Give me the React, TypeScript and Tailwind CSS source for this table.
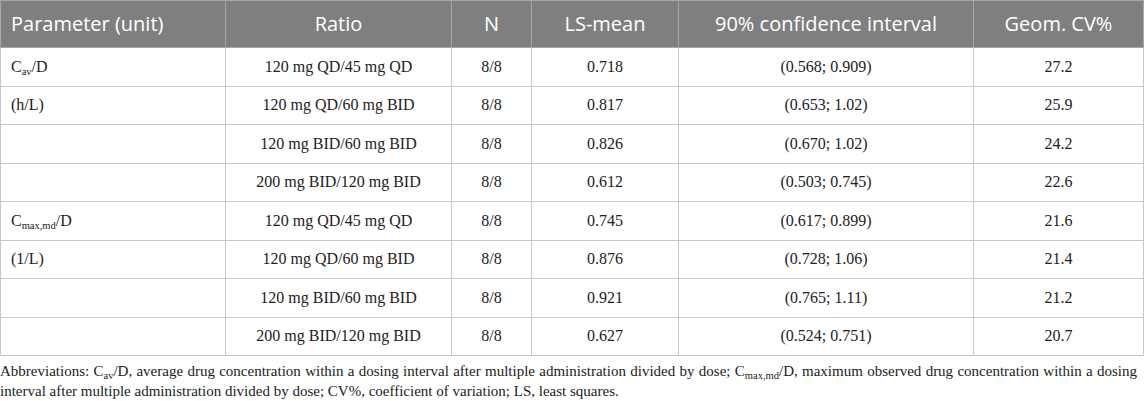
import React from "react";

const serif = { fontFamily: '"Liberation Serif", "Times New Roman", serif' };

type Row = { p: React.ReactNode; r: string; n: string; m: string; ci: string; cv: string };

const Sub = ({ t }: { t: string }) => (
  <sub className="text-[10.5px] align-baseline relative top-[3px]">{t}</sub>
);

const rows: Row[] = [
  { p: <>C<Sub t="av" />/D</>, r: "120 mg QD/45 mg QD", n: "8/8", m: "0.718", ci: "(0.568; 0.909)", cv: "27.2" },
  { p: "(h/L)", r: "120 mg QD/60 mg BID", n: "8/8", m: "0.817", ci: "(0.653; 1.02)", cv: "25.9" },
  { p: "", r: "120 mg BID/60 mg BID", n: "8/8", m: "0.826", ci: "(0.670; 1.02)", cv: "24.2" },
  { p: "", r: "200 mg BID/120 mg BID", n: "8/8", m: "0.612", ci: "(0.503; 0.745)", cv: "22.6" },
  { p: <>C<Sub t="max,md" />/D</>, r: "120 mg QD/45 mg QD", n: "8/8", m: "0.745", ci: "(0.617; 0.899)", cv: "21.6" },
  { p: "(1/L)", r: "120 mg QD/60 mg BID", n: "8/8", m: "0.876", ci: "(0.728; 1.06)", cv: "21.4" },
  { p: "", r: "120 mg BID/60 mg BID", n: "8/8", m: "0.921", ci: "(0.765; 1.11)", cv: "21.2" },
  { p: "", r: "200 mg BID/120 mg BID", n: "8/8", m: "0.627", ci: "(0.524; 0.751)", cv: "20.7" },
];

const widths = ["w-[225px]", "w-[226px]", "w-[80px]", "w-[147px]", "w-[295px]", "w-[170px]"];

export default function App() {
  return (
    <div className="w-[1145px] h-[401px] bg-white overflow-hidden">
      <table className="border-collapse table-fixed w-[1144px]">
        <colgroup>
          {widths.map((w, i) => (
            <col key={i} className={w} />
          ))}
        </colgroup>
        <thead>
          <tr
            className="h-[47px] bg-[#7f7f7f] text-white text-[20px]"
            style={{ fontFamily: '"Open Sans", "Noto Sans", sans-serif' }}
          >
            <th className="font-normal text-left pl-[10px] border border-[#a6a6a6]">Parameter (unit)</th>
            <th className="font-normal text-center border border-[#a6a6a6]">Ratio</th>
            <th className="font-normal text-center border border-[#a6a6a6]">N</th>
            <th className="font-normal text-center border border-[#a6a6a6]">LS-mean</th>
            <th className="font-normal text-center border border-[#a6a6a6]">90% confidence interval</th>
            <th className="font-normal text-center border border-[#a6a6a6]">Geom. CV%</th>
          </tr>
        </thead>
        <tbody className="text-[16px] text-[#222]" style={serif}>
          {rows.map((row, i) => (
            <tr key={i} className="h-[38.5px]">
              <td className="text-left pl-[10px] border border-[#c8c8c8]">{row.p}</td>
              <td className="text-center border border-[#c8c8c8]">{row.r}</td>
              <td className="text-center border border-[#c8c8c8]">{row.n}</td>
              <td className="text-center border border-[#c8c8c8]">{row.m}</td>
              <td className="text-center border border-[#c8c8c8]">{row.ci}</td>
              <td className="text-center border border-[#c8c8c8]">{row.cv}</td>
            </tr>
          ))}
        </tbody>
      </table>
      <p
        className="mt-[5px] w-[1137px] text-[15px] leading-[20px] text-[#222] text-justify"
        style={serif}
      >
        Abbreviations: C<Sub t="av" />/D, average drug concentration within a dosing interval after multiple
        administration divided by dose; C<Sub t="max,md" />/D, maximum observed drug concentration within a dosing
        interval after multiple administration divided by dose; CV%, coefficient of variation; LS, least squares.
      </p>
    </div>
  );
}
